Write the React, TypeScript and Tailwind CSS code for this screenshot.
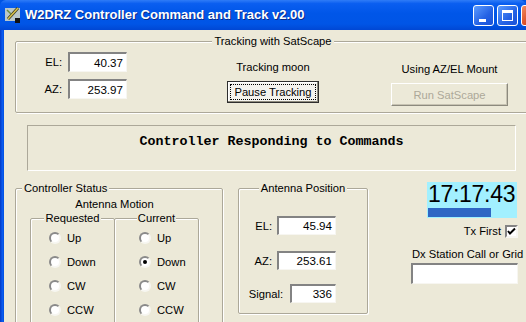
import React from "react";

const sunken =
  "bg-white border-t-2 border-l-2 border-b border-r border-t-[#838383] border-l-[#838383] border-b-[#f7f6f1] border-r-[#f7f6f1]";

const groupBox =
  "border border-[#aca899] shadow-[inset_1px_1px_0_#fff,1px_1px_0_#fff] rounded-[2px]";

function ValueBox({ value, w, h }: { value: string; w: string; h: string }) {
  return (
    <div className={`${sunken} ${w} ${h} flex items-center justify-end pr-[3px] text-[11.6px]`}>
      {value}
    </div>
  );
}

function Radio({ label, checked }: { label: string; checked?: boolean }) {
  return (
    <div className="h-[24px] flex items-center gap-[6px]">
      <div className="w-[12px] h-[12px] rounded-full bg-white border-2 border-t-[#8a8a8a] border-l-[#8a8a8a] border-r-[#f7f6f1] border-b-[#f7f6f1] flex items-center justify-center">
        {checked && <div className="w-[4px] h-[4px] rounded-full bg-black" />}
      </div>
      <span>{label}</span>
    </div>
  );
}

function AppIcon() {
  return (
    <svg width="16" height="16" viewBox="0 0 16 16" className="shrink-0">
      <rect x="0" y="1" width="15" height="13" fill="#b9c7c9" />
      <path d="M13 1 L3 12" stroke="#3a3a20" strokeWidth="3" />
      <path d="M13 1 L3 12" stroke="#d9c24a" strokeWidth="1.5" />
      <path d="M2 3 L6 7" stroke="#6c8c3c" strokeWidth="1.5" />
      <rect x="10" y="11" width="5" height="5" fill="#111" />
    </svg>
  );
}

function TitleBar() {
  return (
    <div className="h-[30px] shrink-0 flex items-center pl-[5px] bg-[linear-gradient(to_bottom,#2f7cf7_0%,#0a5ef0_12%,#0056e8_45%,#0055e6_80%,#0047d4_100%)] rounded-t-[6px]">
      <AppIcon />
      <span className="ml-[4px] text-white font-bold text-[13px] leading-[16px] [text-shadow:1px_1px_0_#0b2a87] whitespace-nowrap">
        W2DRZ Controller Command and Track v2.00
      </span>
      <div className="flex-1" />
      <div className="flex shrink-0 gap-[3px] -mr-[16px] self-start mt-[5px]">
        <div className="w-[21px] h-[21px] rounded-[3px] border border-white bg-[linear-gradient(135deg,#5c9cff,#2461e4_60%,#1a52d8)] relative">
          <div className="absolute left-[5px] top-[13px] w-[7px] h-[3px] bg-white" />
        </div>
        <div className="w-[21px] h-[21px] rounded-[3px] border border-white bg-[linear-gradient(135deg,#5c9cff,#2461e4_60%,#1a52d8)] flex items-center justify-center">
          <div className="w-[11px] h-[11px] border border-white border-t-[3px]" />
        </div>
        <div className="w-[21px] h-[21px] rounded-[3px] border border-white bg-[linear-gradient(135deg,#f08a62,#d9471f_60%,#c33a14)]" />
      </div>
    </div>
  );
}

export default function App() {
  return (
    <div className="w-[526px] h-[322px] overflow-hidden bg-[#0054e3] font-['Liberation_Sans',Arial,sans-serif] text-[11.2px] leading-[14px] text-black">
      <TitleBar />
      <div className="flex h-[292px]">
        <div className="w-[4px] shrink-0 bg-[linear-gradient(to_right,#0339c4,#0a5cf0_60%,#0050df)]" />
        <div className="flex-1 min-w-0 bg-[#ece9d8]">
          {/* Tracking group */}
          <fieldset className={`${groupBox} ml-[11px] mt-[4px] w-[516px] h-[79px]`}>
            <legend className="mx-auto px-[2px] bg-[#ece9d8]">Tracking with SatScape</legend>
            <div className="flex">
              <div className="pt-[4px]">
                <div className="flex items-center gap-[6px]">
                  <span className="w-[46px] text-right">EL:</span>
                  <ValueBox value="40.37" w="w-[59px]" h="h-[20px]" />
                </div>
                <div className="flex items-center gap-[6px] mt-[7px]">
                  <span className="w-[46px] text-right">AZ:</span>
                  <ValueBox value="253.97" w="w-[59px]" h="h-[20px]" />
                </div>
              </div>
              <div className="ml-[100px] w-[92px] flex flex-col items-center pt-[12px]">
                <span>Tracking moon</span>
                <div className="mt-[7px] w-[92px] h-[22px] border border-[#2e2e2e] bg-[#f4f3ee] shadow-[inset_-1px_-1px_0_#8f8c7e,inset_1px_1px_0_#fff] p-[2px]">
                  <div className="w-full h-full border border-dotted border-black flex items-center justify-center">
                    Pause Tracking
                  </div>
                </div>
              </div>
              <div className="ml-[72px] w-[117px] flex flex-col items-center pt-[14px]">
                <span>Using AZ/EL Mount</span>
                <div className="mt-[7px] w-[117px] h-[23px] border border-t-white border-l-white border-r-[#8c8a7e] border-b-[#8c8a7e] shadow-[inset_-1px_-1px_0_#c7c3b3] bg-[#ece9d8] flex items-center justify-center text-[#aca899]">
                  Run SatScape
                </div>
              </div>
            </div>
          </fieldset>

          {/* Status line */}
          <div className="ml-[23px] mt-[12px] w-[489px] h-[46px] border border-t-[#aca899] border-l-[#aca899] border-r-white border-b-white pt-[8px] text-center font-['Liberation_Mono',monospace] font-bold text-[13.33px] leading-[16px]">
            Controller Responding to Commands
          </div>

          {/* Bottom row */}
          <div className="flex items-start mt-[10px]">
            <fieldset className={`${groupBox} ml-[11px] w-[208px] h-[160px] shrink-0`}>
              <legend className="ml-[6px] px-[2px] bg-[#ece9d8]">Controller Status</legend>
              <div className="ml-[14px] w-[169px]">
                <div className="text-center mt-[2px]">Antenna Motion</div>
                <div className="flex">
                  <fieldset className={`${groupBox} w-[85px] h-[130px]`}>
                    <legend className="mx-auto px-[1px] bg-[#ece9d8]">Requested</legend>
                    <div className="pl-[18px] pt-[1px]">
                      <Radio label="Up" />
                      <Radio label="Down" />
                      <Radio label="CW" />
                      <Radio label="CCW" />
                    </div>
                  </fieldset>
                  <fieldset className={`${groupBox} -ml-px w-[85px] h-[130px]`}>
                    <legend className="mx-auto px-[1px] bg-[#ece9d8]">Current</legend>
                    <div className="pl-[24px] pt-[1px]">
                      <Radio label="Up" />
                      <Radio label="Down" checked />
                      <Radio label="CW" />
                      <Radio label="CCW" />
                    </div>
                  </fieldset>
                </div>
              </div>
            </fieldset>

            <fieldset className={`${groupBox} ml-[15px] w-[130px] h-[133px] shrink-0`}>
              <legend className="mx-auto px-[2px] bg-[#ece9d8]">Antenna Position</legend>
              <div className="flex flex-col items-end pr-[31px]">
                <div className="flex items-center gap-[5px] mt-[21px]">
                  <span>EL:</span>
                  <ValueBox value="45.94" w="w-[59px]" h="h-[19px]" />
                </div>
                <div className="flex items-center gap-[5px] mt-[16px]">
                  <span>AZ:</span>
                  <ValueBox value="253.61" w="w-[59px]" h="h-[19px]" />
                </div>
                <div className="flex items-center gap-[7px] mt-[14px]">
                  <span>Signal:</span>
                  <ValueBox value="336" w="w-[46px]" h="h-[19px]" />
                </div>
              </div>
            </fieldset>

            <div className="ml-[43px] w-[107px] shrink-0 flex flex-col items-end">
              <div className="mt-[1px] mr-[1px] w-[90px] h-[36px] bg-[#a2f0ff]">
                <div className="text-[23px] leading-[25px] pl-[1px] tracking-[-0.3px] whitespace-nowrap">17:17:43</div>
                <div className="ml-[1px] mt-[1px] w-[63px] h-[9px] bg-[#2f66c4]" />
              </div>
              <div className="flex items-center gap-[4px] mt-[6px]">
                <span>Tx First</span>
                <div className="w-[13px] h-[13px] bg-white border-2 border-t-[#838383] border-l-[#838383] border-r-[#f7f6f1] border-b-[#f7f6f1] flex items-center justify-center">
                  <svg width="9" height="9" viewBox="0 0 9 9">
                    <path d="M1 4 L3 6.5 L8 1.5" stroke="#000" strokeWidth="2" fill="none" />
                  </svg>
                </div>
              </div>
              <div className="self-start mt-[9px] pl-[1px] whitespace-nowrap">Dx Station Call or Grid</div>
              <div className={`${sunken} w-[107px] h-[21px] mt-[2px]`} />
            </div>
          </div>
        </div>
      </div>
    </div>
  );
}
